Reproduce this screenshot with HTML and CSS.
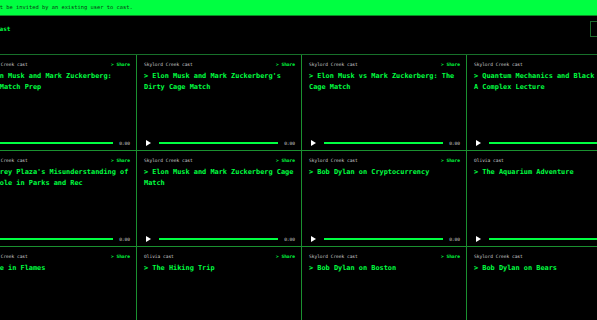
FILE: index.html
```html
<!DOCTYPE html>
<html lang="en">

<head>
    <meta charset="UTF-8">
    <meta name="viewport" content="width=device-width, initial-scale=1.0">
    <title>Casts</title>
    <link rel="stylesheet" href="styles.css">
</head>

<body>
    <div class="page">
        <div class="banner">You must be invited by an existing user to cast.</div>
        <header class="top">
            <span class="heading">cast</span>
            <span class="btn"></span>
        </header>
        <section class="grid">
            <div class="cell">
                <div class="meta"><span>Skylord Creek cast</span><a href="#">&gt; Share</a></div>
                <div class="title">&gt; Elon Musk and Mark Zuckerberg: Cage Match Prep</div>
                <div class="player"><span class="play"></span><span class="bar"></span><span class="time">0:00</span></div>
            </div>
            <div class="cell">
                <div class="meta"><span>Skylord Creek cast</span><a href="#">&gt; Share</a></div>
                <div class="title">&gt; Elon Musk and Mark Zuckerberg's Dirty Cage Match</div>
                <div class="player"><span class="play"></span><span class="bar"></span><span class="time">0:00</span></div>
            </div>
            <div class="cell">
                <div class="meta"><span>Skylord Creek cast</span><a href="#">&gt; Share</a></div>
                <div class="title">&gt; Elon Musk vs Mark Zuckerberg: The Cage Match</div>
                <div class="player"><span class="play"></span><span class="bar"></span><span class="time">0:00</span></div>
            </div>
            <div class="cell">
                <div class="meta"><span>Skylord Creek cast</span><a href="#">&gt; Share</a></div>
                <div class="title">&gt; Quantum Mechanics and Black Holes: A Complex Lecture</div>
                <div class="player"><span class="play"></span><span class="bar"></span><span class="time">0:00</span></div>
            </div>

            <div class="cell">
                <div class="meta"><span>Skylord Creek cast</span><a href="#">&gt; Share</a></div>
                <div class="title">&gt; Aubrey Plaza's Misunderstanding of Her Role in Parks and Rec</div>
                <div class="player"><span class="play"></span><span class="bar"></span><span class="time">0:00</span></div>
            </div>
            <div class="cell">
                <div class="meta"><span>Skylord Creek cast</span><a href="#">&gt; Share</a></div>
                <div class="title">&gt; Elon Musk and Mark Zuckerberg Cage Match</div>
                <div class="player"><span class="play"></span><span class="bar"></span><span class="time">0:00</span></div>
            </div>
            <div class="cell">
                <div class="meta"><span>Skylord Creek cast</span><a href="#">&gt; Share</a></div>
                <div class="title">&gt; Bob Dylan on Cryptocurrency</div>
                <div class="player"><span class="play"></span><span class="bar"></span><span class="time">0:00</span></div>
            </div>
            <div class="cell">
                <div class="meta"><span>Olivia cast</span><a href="#">&gt; Share</a></div>
                <div class="title">&gt; The Aquarium Adventure</div>
                <div class="player"><span class="play"></span><span class="bar"></span><span class="time">0:00</span></div>
            </div>

            <div class="cell">
                <div class="meta"><span>Skylord Creek cast</span><a href="#">&gt; Share</a></div>
                <div class="title">&gt; Rome in Flames</div>
                <div class="player"><span class="play"></span><span class="bar"></span><span class="time">0:00</span></div>
            </div>
            <div class="cell">
                <div class="meta"><span>Olivia cast</span><a href="#">&gt; Share</a></div>
                <div class="title">&gt; The Hiking Trip</div>
                <div class="player"><span class="play"></span><span class="bar"></span><span class="time">0:00</span></div>
            </div>
            <div class="cell">
                <div class="meta"><span>Skylord Creek cast</span><a href="#">&gt; Share</a></div>
                <div class="title">&gt; Bob Dylan on Boston</div>
                <div class="player"><span class="play"></span><span class="bar"></span><span class="time">0:00</span></div>
            </div>
            <div class="cell">
                <div class="meta"><span>Skylord Creek cast</span><a href="#">&gt; Share</a></div>
                <div class="title">&gt; Bob Dylan on Bears</div>
                <div class="player"><span class="play"></span><span class="bar"></span><span class="time">0:00</span></div>
            </div>
        </section>
    </div>
</body>

</html>
```

FILE: styles.css
```css
body {
    margin: 0;
    padding: 0;
    background: #000;
    overflow: hidden;
    font-family: "DejaVu Sans Mono", "Liberation Mono", monospace;
}

.page {
    width: 680px;
    margin-left: -28px;
}

.banner {
    height: 15px;
    line-height: 15px;
    padding-left: 5px;
    background: #00ff41;
    border-bottom: 1px solid #0b8a25;
    color: #0b3a14;
    font-size: 5.4px;
}

.top {
    height: 33px;
    display: flex;
    align-items: flex-start;
    justify-content: space-between;
    padding: 5px 30px 0 24px;
}

.heading {
    color: #00ff41;
    font-size: 6px;
    font-weight: bold;
    line-height: 16px;
}

.btn {
    width: 30px;
    height: 14px;
    border: 1px solid #1d6a2b;
}

.grid {
    display: grid;
    grid-template-columns: repeat(4, 165px);
    grid-auto-rows: 96px;
    border-top: 1px solid #17702a;
}

.cell {
    display: flex;
    flex-direction: column;
    border-right: 1px solid #1a9030;
    border-bottom: 1px solid #1a9030;
    padding: 7px 6px 3px 7px;
}

.meta {
    display: flex;
    justify-content: space-between;
    font-size: 4.5px;
    line-height: 6px;
    color: #cfcfcf;
}

.meta a {
    color: #00ff41;
    text-decoration: none;
    font-weight: bold;
}

.title {
    margin-top: 3px;
    color: #00ff41;
    font-size: 6.9px;
    font-weight: bold;
    line-height: 11px;
    flex: 1;
}

.player {
    display: flex;
    align-items: center;
    height: 8px;
    padding-left: 2px;
}

.play {
    width: 0;
    height: 0;
    border-left: 5px solid #fff;
    border-top: 3px solid transparent;
    border-bottom: 3px solid transparent;
}

.bar {
    flex: 1;
    height: 2px;
    background: #00ff41;
    margin: 0 6px 0 8px;
}

.time {
    font-size: 4.5px;
    color: #cfcfcf;
}
```
